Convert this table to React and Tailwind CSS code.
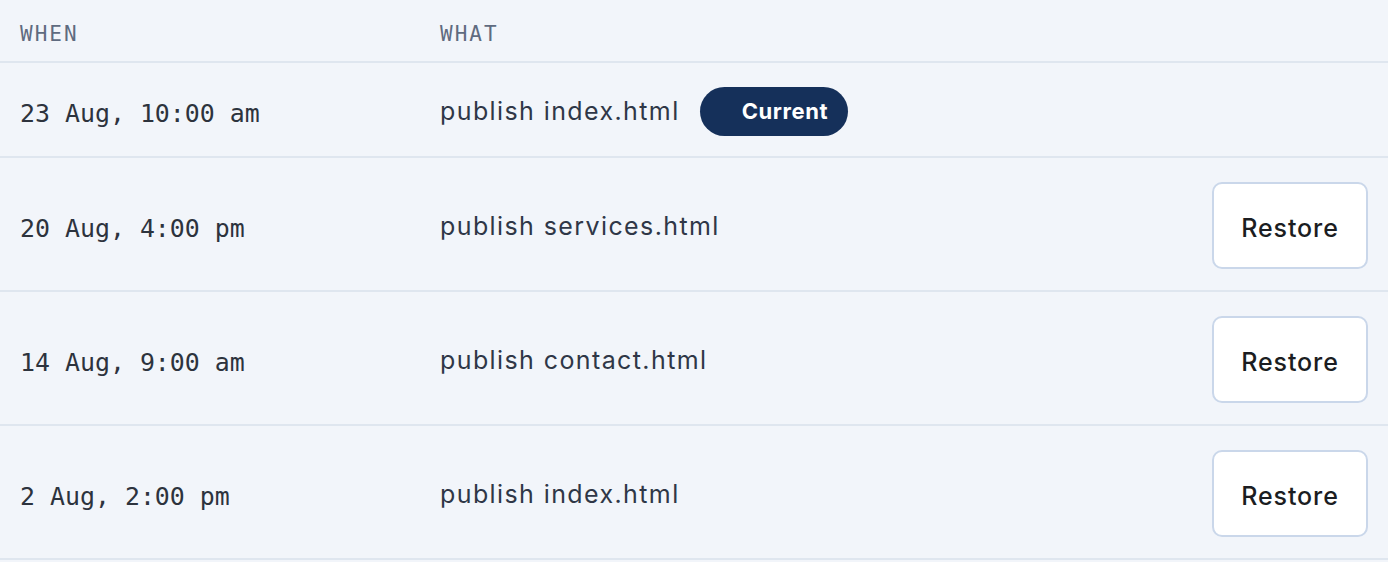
const rows = [
  { when: "23 Aug, 10:00 am", what: "publish index.html", current: true },
  { when: "20 Aug, 4:00 pm", what: "publish services.html" },
  { when: "14 Aug, 9:00 am", what: "publish contact.html" },
  { when: "2 Aug, 2:00 pm", what: "publish index.html" },
];

export default function App() {
  return (
    <div className="min-h-[562px] w-full bg-[#f2f5fa] font-['Inter',sans-serif]">

      {/* header */}
      <div className="grid grid-cols-[420px_1fr] items-center h-[63px] px-5 pt-[8px] border-b-2 border-[#dfe6ef]">
        <div className="font-['DejaVu_Sans_Mono',monospace] text-[21px] tracking-[2px] text-[#5f6b80]">
          WHEN
        </div>
        <div className="font-['DejaVu_Sans_Mono',monospace] text-[21px] tracking-[2px] text-[#5f6b80]">
          WHAT
        </div>
      </div>

      {rows.map((row, i) => (
        <div
          key={i}
          className={
            row.current
              ? "grid grid-cols-[420px_1fr_auto] items-center h-[95px] px-5 border-b-2 border-[#dfe6ef]"
              : "grid grid-cols-[420px_1fr_auto] items-center h-[134px] px-5 border-b-2 border-[#dfe6ef]"
          }
        >
          <div className="pt-[9px] font-['DejaVu_Sans_Mono',monospace] text-[24.9px] text-[#2d333d]">
            {row.when}
          </div>

          <div className="flex items-center gap-5">
            <span className="pt-[5px] text-[25px] text-[#2f3747] tracking-[1.4px]">
              {row.what}
            </span>
            {row.current && (
              <span className="mt-[4px] bg-[#15305a] text-white font-bold text-[22px] tracking-[0.6px] rounded-full h-[49px] flex items-center pl-[42px] pr-[20px]">
                Current
              </span>
            )}
          </div>

          <div>
            {!row.current && (
              <button className="mt-[3px] w-[156px] h-[87px] pt-[6px] bg-white border-2 border-[#cad7ea] rounded-[10px] text-[25px] font-medium tracking-[0.9px] text-[#1b1d22]">
                Restore
              </button>
            )}
          </div>
        </div>
      ))}
    </div>
  );
}
